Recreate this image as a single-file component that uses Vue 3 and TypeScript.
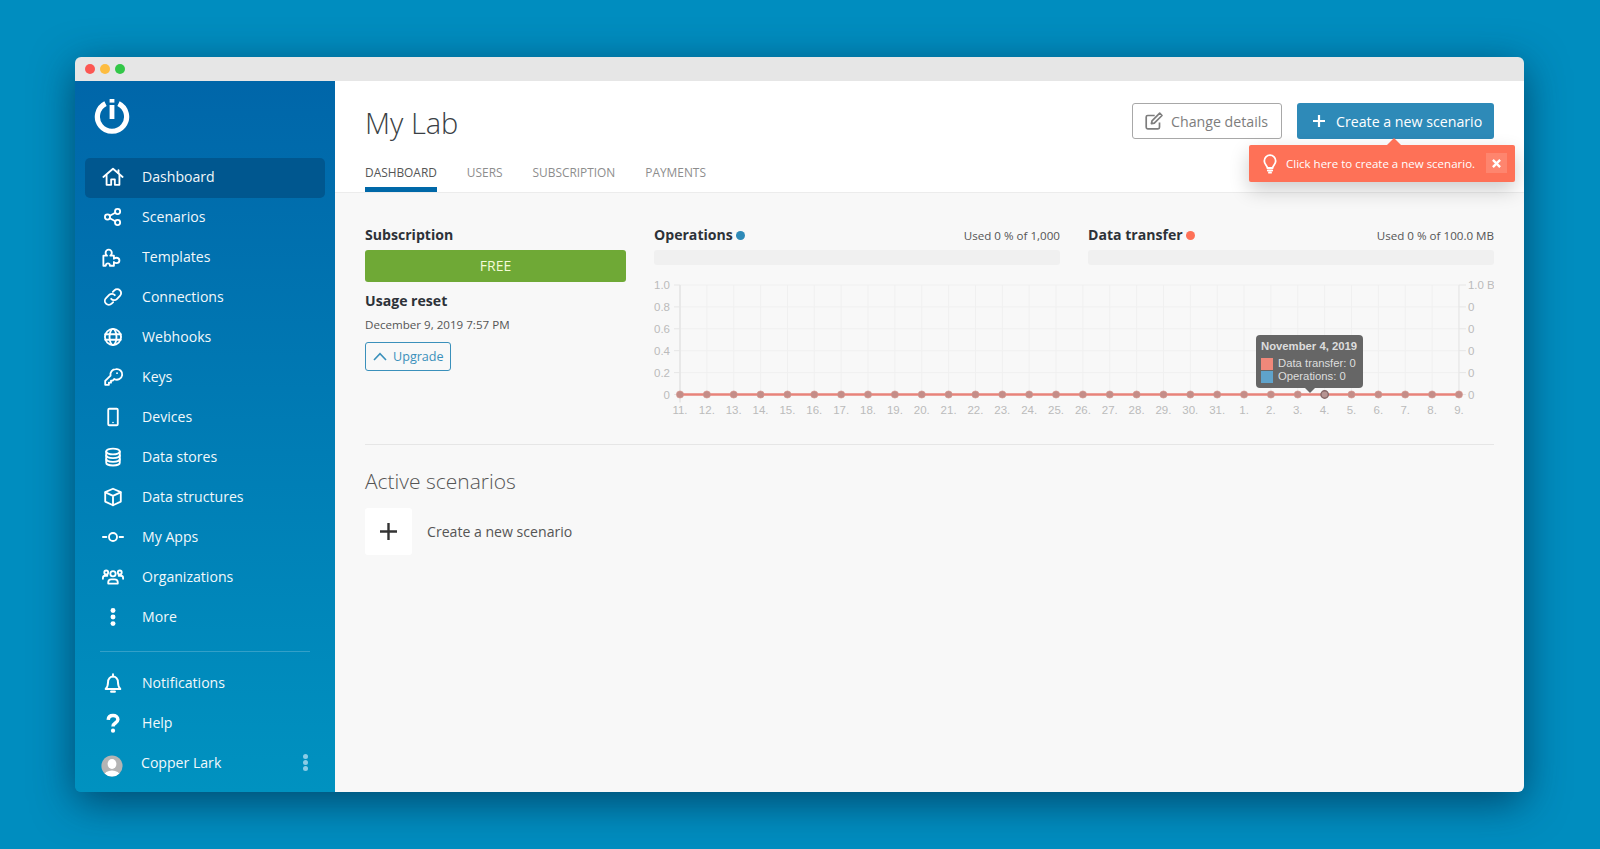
<script setup lang="ts">
const navMain = [
  { label: 'Dashboard', icon: 'home', active: true },
  { label: 'Scenarios', icon: 'share' },
  { label: 'Templates', icon: 'puzzle' },
  { label: 'Connections', icon: 'link' },
  { label: 'Webhooks', icon: 'globe' },
  { label: 'Keys', icon: 'key' },
  { label: 'Devices', icon: 'phone' },
  { label: 'Data stores', icon: 'db' },
  { label: 'Data structures', icon: 'cube' },
  { label: 'My Apps', icon: 'apps' },
  { label: 'Organizations', icon: 'users' },
  { label: 'More', icon: 'more' },
]
const navBottom = [
  { label: 'Notifications', icon: 'bell' },
  { label: 'Help', icon: 'help' },
]
const tabs = ['DASHBOARD', 'USERS', 'SUBSCRIPTION', 'PAYMENTS']

const days = [11,12,13,14,15,16,17,18,19,20,21,22,23,24,25,26,27,28,29,30,31,1,2,3,4,5,6,7,8,9]
const left = 26
const step = 26.86
const top = 5
const rowH = 21.9
const xs = days.map((d, i) => ({ d, i, x: left + i * step }))
const ys = [0, 1, 2, 3, 4, 5].map(i => top + i * rowH)
const leftLabels = ['1.0', '0.8', '0.6', '0.4', '0.2', '0']
const rightLabels = ['1.0 B', '0', '0', '0', '0', '0']
const bottom = top + 5 * rowH
const right = left + 29 * step
</script>

<template>
  <div class="page">
    <div class="window">
      <div class="titlebar">
        <span class="light red"></span>
        <span class="light yellow"></span>
        <span class="light green"></span>
      </div>
      <div class="shell">
        <aside class="sidebar">
          <div class="logo">
            <svg width="36" height="36" viewBox="0 0 36 36" fill="none">
              <path d="M11.5 5.6 A14.6 14.6 0 1 0 24.5 5.6" stroke="#fff" stroke-width="5.2" />
              <rect x="15.6" y="1" width="4.8" height="3.6" fill="#fff" />
              <rect x="15.6" y="7" width="4.8" height="14" fill="#fff" />
            </svg>
          </div>
          <nav class="nav">
            <a v-for="item in navMain" :key="item.label" class="nav-item" :class="{ active: item.active }">
              <span class="nav-icon">
                <svg width="22" height="22" viewBox="0 0 24 24" fill="none" stroke="#fff" stroke-width="2" stroke-linejoin="round" stroke-linecap="round">
                  <template v-if="item.icon === 'home'">
                    <path d="M1.500 12 12 3 22.500 12" />
                    <path d="M5 10v10.500h5v-6h4v6h5V10" />
                    <path d="M18 4.500v3.500" />
                  </template>
                  <template v-else-if="item.icon === 'share'">
                    <circle cx="6" cy="12" r="2.800" />
                    <circle cx="17" cy="6" r="2.800" />
                    <circle cx="17" cy="18" r="2.800" />
                    <path d="M8.500 10.700 14.500 7.400M8.500 13.300l6 3.300" />
                  </template>
                  <template v-else-if="item.icon === 'puzzle'">
                    <path d="M1.500 21.500v-11h4c-1.200-1-1.600-2-1.600-3 0-1.800 1.500-3.500 3.400-3.500s3.400 1.700 3.400 3.500c0 1-.4 2-1.600 3h3.900v3.500c.6-.9 1.400-1.200 2.500-1.200 1.900 0 3.500 1.200 3.500 2.900s-1.600 2.900-3.500 2.900c-1.100 0-1.900-.3-2.500-1.100v4h-4.400c.3-3.500-4.700-3.500-4.400 0Z" />
                  </template>
                  <template v-else-if="item.icon === 'link'">
                    <path d="M10 14a4.200 4.200 0 0 0 6.200.2l3.400-3.400a4.300 4.300 0 0 0-6.100-6.100L11.800 6.400" />
                    <path d="M14 10a4.200 4.200 0 0 0-6.200-.2l-3.400 3.400a4.300 4.300 0 0 0 6.100 6.100l1.700-1.700" />
                  </template>
                  <template v-else-if="item.icon === 'globe'">
                    <circle cx="12" cy="12" r="8.800" />
                    <ellipse cx="12" cy="12" rx="3.800" ry="8.800" />
                    <path d="M3.600 9h16.800M3.600 15h16.800" />
                  </template>
                  <template v-else-if="item.icon === 'key'">
                    <path d="M15 3.500a5.800 5.800 0 0 0-5.700 7L3.500 16.300V20.500h4v-2.300h2.300v-2.300h1.900l1.700-1.700A5.800 5.800 0 1 0 15 3.500Z" />
                    <circle cx="16.400" cy="7.800" r="1" fill="#fff" stroke="none" />
                  </template>
                  <template v-else-if="item.icon === 'phone'">
                    <rect x="6.800" y="3" width="10.400" height="18" rx="1.200" />
                    <circle cx="12" cy="18" r=".9" fill="#fff" stroke="none" />
                  </template>
                  <template v-else-if="item.icon === 'db'">
                    <ellipse cx="12" cy="6" rx="7.400" ry="3.200" />
                    <path d="M4.600 6v12.200c0 1.700 3.300 3.100 7.400 3.100s7.400-1.400 7.400-3.100V6" />
                    <path d="M4.600 10.200c0 1.700 3.300 3.100 7.400 3.100s7.400-1.400 7.400-3.100M4.600 14.300c0 1.700 3.300 3.100 7.400 3.100s7.400-1.400 7.400-3.100" />
                  </template>
                  <template v-else-if="item.icon === 'cube'">
                    <path d="M12 3 20.500 6.600V17L12 21l-8.500-4V6.600Z" />
                    <path d="M3.800 7 12 10.800 20.200 7M12 10.800V21" />
                  </template>
                  <template v-else-if="item.icon === 'apps'">
                    <circle cx="12" cy="12" r="4.400" />
                    <path d="M1 12h3.800M19.200 12H23" />
                  </template>
                  <template v-else-if="item.icon === 'users'">
                    <circle cx="12" cy="8.400" r="2.900" />
                    <circle cx="4.600" cy="7" r="2.100" />
                    <circle cx="19.400" cy="7" r="2.100" />
                    <path d="M6.800 19.200v-1.500c0-2 1.600-3.200 3.300-3.200h3.800c1.700 0 3.300 1.200 3.300 3.200v1.500Z" />
                    <path d="M1 14v-1c0-1.500 1-2.400 2.400-2.400h2.400M23 14v-1c0-1.500-1-2.400-2.400-2.400h-2.400" />
                  </template>
                  <template v-else-if="item.icon === 'more'">
                    <circle cx="12" cy="4.800" r="2.700" fill="#fff" stroke="none" />
                    <circle cx="12" cy="12" r="2.700" fill="#fff" stroke="none" />
                    <circle cx="12" cy="19.200" r="2.700" fill="#fff" stroke="none" />
                  </template>
                </svg>
              </span>
              <span class="nav-label">{{ item.label }}</span>
            </a>
          </nav>
          <div class="nav-divider"></div>
          <nav class="nav">
            <a v-for="item in navBottom" :key="item.label" class="nav-item">
              <span class="nav-icon">
                <svg v-if="item.icon === 'bell'" width="22" height="22" viewBox="0 0 24 24" fill="none" stroke="#fff" stroke-width="2.100" stroke-linejoin="round" stroke-linecap="round">
                  <path d="M4 18.600c2-2 2.600-3.600 2.600-7.600 0-3.200 2.300-6 5.400-6s5.400 2.800 5.400 6c0 4 .6 5.600 2.600 7.600Z" />
                  <path d="M12 2.500V5" />
                  <path d="M10 21.500h4" stroke-width="2.400" />
                </svg>
                <svg v-else width="22" height="22" viewBox="0 0 24 24" fill="none" stroke="#fff" stroke-width="3.800">
                  <path d="M6.800 8.600C7 5.500 9.200 3.900 12 3.900c3 0 5.300 1.700 5.300 4.400 0 3.800-5.300 3.700-5.300 7.400" />
                  <circle cx="12" cy="20.400" r="2.300" fill="#fff" stroke="none" />
                </svg>
              </span>
              <span class="nav-label">{{ item.label }}</span>
            </a>
            <a class="nav-item user">
              <span class="nav-icon avatar">
                <svg width="22" height="22" viewBox="0 0 22 22">
                  <defs>
                    <clipPath id="avatar-clip"><circle cx="11" cy="11" r="10.600" /></clipPath>
                  </defs>
                  <circle cx="11" cy="11" r="10.600" fill="#b4b4b4" />
                  <g clip-path="url(#avatar-clip)" fill="#fff">
                    <ellipse cx="11" cy="9" rx="4.400" ry="5" />
                    <ellipse cx="11" cy="21" rx="8" ry="5.500" />
                  </g>
                </svg>
              </span>
              <span class="nav-label user-name">Copper Lark</span>
              <span class="user-dots"><i></i><i></i><i></i></span>
            </a>
          </nav>
        </aside>

        <main class="main">
          <header class="header">
            <div class="header-top">
              <h1 class="title">My Lab</h1>
              <div class="actions">
                <button class="btn btn-outline">
                  <svg width="20" height="20" viewBox="0 0 20 20" fill="none" stroke="#7d7d7d" stroke-width="1.700" stroke-linejoin="round">
                    <path d="M15.500 11.500v4.800c0 .9-.6 1.500-1.500 1.500H3.700c-.9 0-1.500-.6-1.500-1.500V6c0-.9.600-1.500 1.500-1.500h7" />
                    <path d="M8 9.800 15.700 2.200l2.300 2.300-7.700 7.600-2.900.6Z" />
                  </svg>
                  Change details
                </button>
                <div class="create-wrap">
                  <button class="btn btn-primary">
                    <svg width="14" height="14" viewBox="0 0 14 14" stroke="#fff" stroke-width="2.200">
                      <path d="M7 1v12M1 7h12" />
                    </svg>
                    Create a new scenario
                  </button>
                  <div class="hint">
                    <svg width="16" height="20" viewBox="0 0 18 22" fill="none" stroke="#fff" stroke-width="2" stroke-linejoin="round">
                      <path d="M6 15.500c0-2.500-3.400-4-3.400-8a6.400 6.400 0 0 1 12.800 0c0 4-3.400 5.500-3.400 8Z" />
                      <path d="M6.500 18.300h5M7.800 20.800h2.400" stroke-linecap="round" />
                    </svg>
                    <span class="hint-text">Click here to create a new scenario.</span>
                    <span class="hint-close">
                      <svg width="9" height="9" viewBox="0 0 10 10" stroke="#fff" stroke-width="2.600"><path d="M1 1l8 8M9 1 1 9" /></svg>
                    </span>
                  </div>
                </div>
              </div>
            </div>
            <div class="tabs">
              <a v-for="(t, i) in tabs" :key="t" class="tab" :class="{ current: i === 0 }">{{ t }}</a>
            </div>
          </header>

          <section class="content">
            <div class="overview">
              <div class="plan">
                <h3 class="stat-title">Subscription</h3>
                <div class="plan-badge">FREE</div>
                <h3 class="stat-title reset">Usage reset</h3>
                <p class="reset-date">December 9, 2019 7:57 PM</p>
                <button class="upgrade">
                  <svg width="14" height="9" viewBox="0 0 14 9" fill="none" stroke="#3a90bb" stroke-width="1.600"><path d="M1 8l6-6.300L13 8" /></svg>
                  Upgrade
                </button>
              </div>
              <div class="usage">
                <div class="meters">
                  <div class="meter">
                    <div class="meter-head">
                      <h3 class="stat-title">Operations <i class="dot dot-blue"></i></h3>
                      <span class="used">Used 0 % of 1,000</span>
                    </div>
                    <div class="meter-track"></div>
                  </div>
                  <div class="meter">
                    <div class="meter-head">
                      <h3 class="stat-title">Data transfer <i class="dot dot-red"></i></h3>
                      <span class="used">Used 0 % of 100.0 MB</span>
                    </div>
                    <div class="meter-track"></div>
                  </div>
                </div>
                <div class="chart">
                  <svg width="840" height="138" viewBox="0 0 840 138" class="chart-svg">
                    <g stroke="#f0f0f0" stroke-width="1">
                      <line v-for="x in xs" :key="'v' + x.i" :x1="x.x" :x2="x.x" :y1="top" :y2="bottom" />
                      <line v-for="(y, i) in ys" :key="'h' + i" :x1="left" :x2="right" :y1="y" :y2="y" />
                    </g>
                    <line :x1="left" :x2="left" :y1="top" :y2="bottom + 8" stroke="#e4e4e4" stroke-width="1.500" />
                    <line :x1="right" :x2="right" :y1="top" :y2="bottom" stroke="#e8e8e8" stroke-width="1.200" />
                    <g stroke="#e6e6e6" stroke-width="1">
                      <line v-for="(y, i) in ys" :key="'t' + i" :x1="left - 6" :x2="left" :y1="y" :y2="y" />
                      <line v-for="(y, i) in ys" :key="'r' + i" :x1="right" :x2="right + 7" :y1="y" :y2="y" />
                    </g>
                    <g class="axis" text-anchor="end">
                      <text v-for="(l, i) in leftLabels" :key="'l' + i" :x="left - 10" :y="ys[i] + 4">{{ l }}</text>
                    </g>
                    <g class="axis">
                      <text v-for="(l, i) in rightLabels" :key="'rr' + i" :x="right + 9" :y="ys[i] + 4">{{ l }}</text>
                    </g>
                    <g class="axis" text-anchor="middle">
                      <text v-for="x in xs" :key="'x' + x.i" :x="x.x" :y="bottom + 19.500">{{ x.d }}.</text>
                    </g>
                    <line :x1="left" :x2="right" :y1="bottom" :y2="bottom" stroke="#e8837a" stroke-width="2.400" />
                    <circle v-for="x in xs" :key="'p' + x.i" :cx="x.x" :cy="bottom" r="3.600" fill="#c48d88" stroke="#d8948c" stroke-width=".6" />
                    <circle :cx="left + 24 * step" :cy="bottom" r="3.700" fill="#b69492" stroke="#846868" stroke-width="1.400" />
                  </svg>
                  <div class="chart-tip">
                    <div class="tip-title">November 4, 2019</div>
                    <div class="tip-row"><i class="tip-swatch swatch-red"></i>Data transfer: 0</div>
                    <div class="tip-row"><i class="tip-swatch swatch-blue"></i>Operations: 0</div>
                  </div>
                </div>
              </div>
            </div>

            <div class="rule"></div>

            <h2 class="section-title">Active scenarios</h2>
            <div class="new-row">
              <span class="new-card">
                <svg width="17" height="17" viewBox="0 0 17 17" stroke="#333" stroke-width="2.400"><path d="M8.500 0v17M0 8.500h17" /></svg>
              </span>
              <span class="new-label">Create a new scenario</span>
            </div>
          </section>
        </main>
      </div>
    </div>
  </div>
</template>

<style>
html, body { margin: 0; background: #008dbf; }
</style>

<style scoped>
.page {
  box-sizing: border-box;
  width: 1600px;
  height: 849px;
  padding: 57px 75px;
  overflow: hidden;
  background: #008dbf;
  font-family: "Open Sans", "Noto Sans", sans-serif;
}
.window {
  width: 1449px;
  height: 735px;
  border-radius: 6px;
  display: flex;
  flex-direction: column;
  box-shadow: 0 10px 42px rgba(0, 30, 60, .62);
}
.titlebar {
  height: 24px;
  flex: none;
  background: #e6e6e6;
  border-radius: 6px 6px 0 0;
  display: flex;
  align-items: center;
  gap: 5px;
  padding-left: 10px;
}
.light { width: 10px; height: 10px; border-radius: 50%; }
.red { background: #fc5753; }
.yellow { background: #fdbc40; }
.green { background: #33c748; }
.shell { flex: 1; display: flex; min-height: 0; }
.sidebar {
  width: 260px;
  flex: none;
  box-sizing: border-box;
  padding: 0 10px;
  background: linear-gradient(180deg, #0066a9 0%, #0092c0 100%);
  border-radius: 0 0 0 6px;
  display: flex;
  flex-direction: column;
}
.logo { height: 77px; display: flex; align-items: flex-start; padding: 17px 0 0 9px; box-sizing: border-box; }
.nav { display: flex; flex-direction: column; }
.nav-item {
  height: 40px;
  box-sizing: border-box;
  padding-bottom: 3px;
  display: flex;
  align-items: center;
  border-radius: 5px;
  color: #fff;
  font-size: 14.1px;
}
.nav-item.active { background: #00578f; }
.nav-icon { width: 57px; padding-left: 17px; box-sizing: border-box; display: flex; align-items: center; flex: none; }
.nav-icon svg { display: block; }
.nav-label { opacity: .95; }
.nav-divider { height: 1px; background: rgba(255, 255, 255, .2); margin: 13px 15px 12px; }
.avatar { padding-top: 6px; padding-left: 16px; }
.user-name { margin-left: -1px; }
.user-dots { margin-left: auto; margin-right: 17px; display: flex; flex-direction: column; gap: 1px; }
.user-dots i { width: 5px; height: 5px; border-radius: 50%; background: #8acce6; }

.main { flex: 1; min-width: 0; display: flex; flex-direction: column; background: #f8f8f8; border-radius: 0 0 6px 0; }
.header {
  height: 112px;
  flex: none;
  box-sizing: border-box;
  background: #fff;
  border-bottom: 1px solid #ececec;
  padding: 0 30px;
  display: flex;
  flex-direction: column;
}
.header-top { display: flex; justify-content: space-between; align-items: flex-start; height: 78px; }
.title { margin: 20px 0 0; font-size: 29px; line-height: 44px; font-weight: 300; color: #3a3f45; }
.actions { display: flex; gap: 15px; padding-top: 22px; }
.btn {
  height: 36px;
  box-sizing: border-box;
  border-radius: 3px;
  font: inherit;
  font-size: 14.2px;
  display: flex;
  align-items: center;
  padding: 0;
}
.btn-outline { width: 150px; border: 1px solid #a8a8a8; background: #fff; color: #7d7d7d; gap: 7px; padding-left: 11px; }
.btn-primary { width: 197px; border: 0; background: #2e8ab8; color: #fff; gap: 10px; padding-left: 15px; }
.create-wrap { position: relative; }
.hint {
  position: absolute;
  left: -48px;
  top: 42px;
  width: 266px;
  height: 37px;
  box-sizing: border-box;
  background: #fe7157;
  border-radius: 2px;
  color: #fff;
  font-size: 11.5px;
  display: flex;
  align-items: center;
  padding-left: 13px;
  box-shadow: 0 8px 20px rgba(0, 0, 0, .2);
  z-index: 3;
}
.hint::before {
  content: "";
  position: absolute;
  left: 138px;
  top: -7px;
  border: 7px solid transparent;
  border-top: 0;
  border-bottom-color: #fe7157;
}
.hint-text { margin-left: 8px; white-space: nowrap; }
.hint-close {
  position: absolute;
  right: 8px;
  top: 8px;
  width: 21px;
  height: 20px;
  background: rgba(255, 255, 255, .14);
  display: flex;
  align-items: center;
  justify-content: center;
}
.tabs { display: flex; gap: 30px; flex: 1; }
.tab {
  color: #8d8d8d;
  font-size: 11.9px;
  height: 33px;
  line-height: 27px;
  box-sizing: border-box;
}
.tab.current { color: #555; border-bottom: 5px solid #0068a8; }

.content { padding: 0 30px; }
.overview { display: flex; gap: 28px; padding-top: 30px; }
.plan { width: 261px; flex: none; }
.stat-title { margin: 0; font-size: 14.1px; line-height: 24px; font-weight: 700; color: #2d3238; }
.plan-badge {
  height: 32px;
  margin-top: 3px;
  border-radius: 3px;
  background: #6fa936;
  color: #f4fbd8;
  font-size: 14px;
  line-height: 32px;
  text-align: center;
}
.reset { margin-top: 7px; }
.reset-date { margin: 2px 0 0; font-size: 11.6px; line-height: 20px; color: #555; }
.upgrade {
  margin-top: 7px;
  width: 86px;
  height: 29px;
  box-sizing: border-box;
  padding: 0 0 0 7px;
  border: 1px solid #3a90bb;
  border-radius: 3px;
  background: transparent;
  color: #3a90bb;
  font: inherit;
  font-size: 12.6px;
  display: flex;
  align-items: center;
  gap: 6px;
}
.usage { width: 840px; flex: none; }
.meters { display: grid; grid-template-columns: 406px 406px; gap: 28px; }
.meter-head { display: flex; justify-content: space-between; align-items: center; height: 24px; }
.dot { display: inline-block; width: 9px; height: 9px; border-radius: 50%; margin-left: 0; }
.dot-blue { background: #2e8ab8; }
.dot-red { background: #fe7157; }
.used { font-size: 11.6px; color: #555; }
.meter-track { height: 15px; margin-top: 3px; border-radius: 3px; background: #f0f0f0; }
.chart { position: relative; margin-top: 15px; height: 139px; }
.chart-svg { display: block; }
.axis { font-family: "Liberation Sans", Arial, sans-serif; font-size: 11.5px; fill: #bbb; }
.chart-tip {
  position: absolute;
  left: 602px;
  top: 55px;
  width: 107px;
  height: 53px;
  box-sizing: border-box;
  padding: 5px 5px;
  border-radius: 4px;
  background: #666;
  color: #ddd;
  font-family: "Liberation Sans", Arial, sans-serif;
  font-size: 11.3px;
  line-height: 13px;
}
.chart-tip::after {
  content: "";
  position: absolute;
  left: 49px;
  bottom: -5px;
  border: 5px solid transparent;
  border-bottom: 0;
  border-top-color: #666;
}
.tip-title { font-weight: 700; margin-bottom: 4px; white-space: nowrap; }
.tip-row { display: flex; align-items: center; gap: 5px; white-space: nowrap; height: 13px; }
.tip-swatch { width: 12px; height: 12px; flex: none; }
.swatch-red { background: #f0887a; }
.swatch-blue { background: #5fa3cb; }
.rule { height: 1px; background: #e6e6e6; margin-top: 25px; }
.section-title { margin: 21px 0 0; font-size: 21px; line-height: 30px; font-weight: 300; color: #555; }
.new-row { display: flex; align-items: center; gap: 15px; margin-top: 12px; }
.new-card {
  width: 47px;
  height: 47px;
  border-radius: 3px;
  background: #fff;
  display: flex;
  align-items: center;
  justify-content: center;
}
.new-label { font-size: 14.1px; color: #555; }
</style>
